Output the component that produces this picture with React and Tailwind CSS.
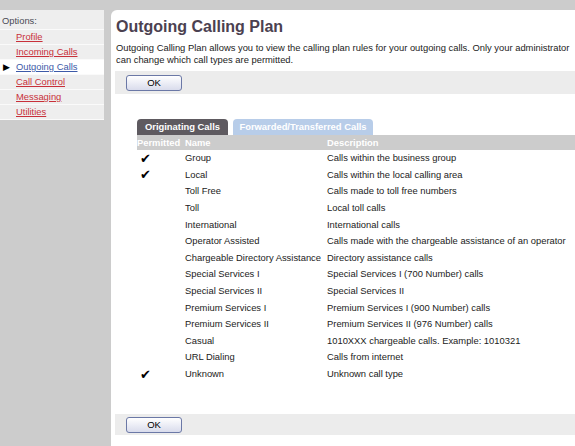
import React from "react";

const rows = [
  [true, "Group", "Calls within the business group"],
  [true, "Local", "Calls within the local calling area"],
  [false, "Toll Free", "Calls made to toll free numbers"],
  [false, "Toll", "Local toll calls"],
  [false, "International", "International calls"],
  [false, "Operator Assisted", "Calls made with the chargeable assistance of an operator"],
  [false, "Chargeable Directory Assistance", "Directory assistance calls"],
  [false, "Special Services I", "Special Services I (700 Number) calls"],
  [false, "Special Services II", "Special Services II"],
  [false, "Premium Services I", "Premium Services I (900 Number) calls"],
  [false, "Premium Services II", "Premium Services II (976 Number) calls"],
  [false, "Casual", "1010XXX chargeable calls. Example: 1010321"],
  [false, "URL Dialing", "Calls from internet"],
  [true, "Unknown", "Unknown call type"],
];

const links = ["Profile", "Incoming Calls", "Outgoing Calls", "Call Control", "Messaging", "Utilities"];

function OkButton() {
  return (
    <button className="w-[56px] h-[16px] rounded-[3px] border border-[#6b78a6] bg-gradient-to-b from-white to-[#d9dcec] text-[9.5px] leading-[14px] text-black">
      OK
    </button>
  );
}

export default function App() {
  return (
    <div
      className="w-[575px] h-[446px] bg-[#cccccc] pt-[10px] flex text-[9.4px] text-[#222222] overflow-hidden"
      style={{ fontFamily: '"Liberation Sans", Arial, sans-serif' }}
    >
      <div className="w-[104px] shrink-0 self-start bg-[#eeeeee]">
        <div className="h-[20px] pl-[2px] pt-[5px] leading-[12px] text-[#4a4a55] border-b border-[#fafafa]">Options:</div>
        {links.map((l) => {
          const sel = l === "Outgoing Calls";
          return (
            <div
              key={l}
              className={`h-[15px] flex items-center border-b border-[#fafafa] ${sel ? "bg-white" : ""}`}
            >
              <span className="w-[16px] pl-[3px] text-[9px] text-black leading-none">{sel ? "▶" : ""}</span>
              <span className={`underline ${sel ? "text-[#3d5aa8]" : "text-[#c8303a]"}`}>{l}</span>
            </div>
          );
        })}
      </div>
      <div className="ml-[7px] flex-1 bg-white rounded-tl-[6px] pl-[4px] flex flex-col">
        <h1 className="text-[16px] font-bold text-[#4b4150] leading-[20px] mt-[7px] ml-[1px] whitespace-nowrap">Outgoing Calling Plan</h1>
        <p className="mt-[5px] ml-[1px] leading-[11.5px] text-[#222222] whitespace-nowrap">
          Outgoing Calling Plan allows you to view the calling plan rules for your outgoing calls. Only your administrator
          <br />
          can change which call types are permitted.
        </p>
        <div className="mt-[6px] h-[23px] bg-[#ececec] flex items-center pl-[11px]">
          <OkButton />
        </div>
        <div className="ml-[22px] mt-[25px]">
          <div className="flex gap-[5px] h-[16px] items-end">
            <div className="h-[16px] w-[91px] bg-[#5e5a60] rounded-t-[4px] text-white font-bold flex items-center justify-center leading-none whitespace-nowrap">
              Originating Calls
            </div>
            <div className="h-[16px] w-[140px] bg-[#b8cde9] rounded-t-[4px] text-white font-bold flex items-center justify-center leading-none whitespace-nowrap">
              Forwarded/Transferred Calls
            </div>
          </div>
          <div className="h-[15px] bg-[#cccccc] text-white font-bold flex items-center leading-none whitespace-nowrap">
            <span className="w-[48px]">Permitted</span>
            <span className="w-[142px]">Name</span>
            <span>Description</span>
          </div>
          <div>
            {rows.map(([p, n, d]) => (
              <div key={n} className="h-[16.6px] flex items-center text-[#222222] whitespace-nowrap">
                <span className="w-[48px] pl-[3px] text-[13px] leading-none text-black">{p ? "✔" : ""}</span>
                <span className="w-[142px]">{n}</span>
                <span>{d}</span>
              </div>
            ))}
          </div>
        </div>
        <div className="mt-auto mb-[11px] h-[21px] bg-[#ececec] flex items-center pl-[11px]">
          <OkButton />
        </div>
      </div>
    </div>
  );
}
